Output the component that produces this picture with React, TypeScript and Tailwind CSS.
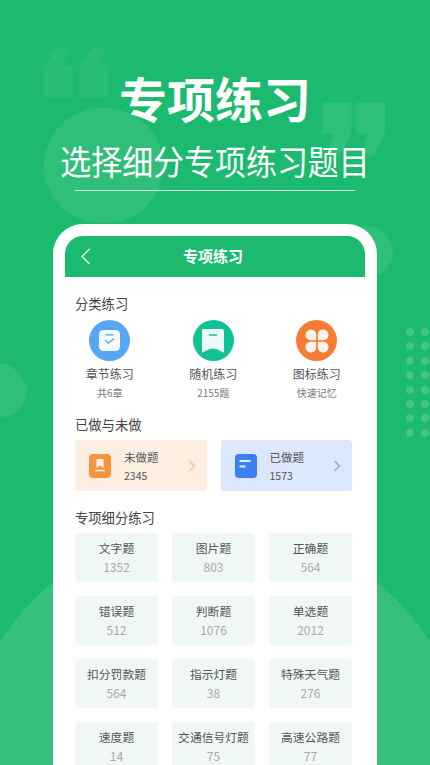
import React from 'react';

const font = { fontFamily: '"Noto Sans CJK SC", "Noto Sans", sans-serif' };

const practice = [
  { name: '文字题', count: 1352 },
  { name: '图片题', count: 803 },
  { name: '正确题', count: 564 },
  { name: '错误题', count: 512 },
  { name: '判断题', count: 1076 },
  { name: '单选题', count: 2012 },
  { name: '扣分罚款题', count: 564 },
  { name: '指示灯题', count: 38 },
  { name: '特殊天气题', count: 276 },
  { name: '速度题', count: 14 },
  { name: '交通信号灯题', count: 75 },
  { name: '高速公路题', count: 77 },
];

const Decor: React.FC = () => (
  <div className="absolute inset-0 pointer-events-none">
    <div className="absolute left-[-42px] top-[525px] w-[514px] h-[514px] rounded-full bg-[#36c07c]" />
    <div className="absolute left-[44px] top-[108px] w-[119px] h-[115px] rounded-full bg-[#2fbf79]" />
    <div className="absolute left-[341px] top-[226px] w-[52px] h-[52px] rounded-full bg-[#2fbf79]" />
    <div className="absolute left-[-28px] top-[364px] w-[54px] h-[54px] rounded-full bg-[#2fbf79]" />
    <svg className="absolute left-[44px] top-[47px]" width="64" height="51" viewBox="0 0 64 51" fill="#27bd75" stroke="#27bd75" strokeWidth="3" strokeLinejoin="round">
      <path d="M13 2h11L17 20h10v29H2V22z" />
      <path d="M49 2h11L53 20h9v29H37V22z" />
    </svg>
    <svg className="absolute left-[322px] top-[102px]" width="64" height="54" viewBox="0 0 64 54" fill="#2ebf78" stroke="#2ebf78" strokeWidth="3" strokeLinejoin="round">
      <path d="M2 2h26v28L17 52H7l7-22H2z" />
      <path d="M36 2h26v28L51 52H41l7-22H36z" />
    </svg>
    <div className="absolute left-[406px] top-[328px] grid grid-cols-2 gap-x-[7px] gap-y-[6.4px]">
      {Array.from({ length: 16 }).map((_, i) => (
        <div key={i} className="w-[8px] h-[8px] rounded-full bg-[#45c488]" />
      ))}
    </div>
  </div>
);

const SectionTitle: React.FC<{ children: React.ReactNode; className?: string }> = ({ children, className }) => (
  <div className={`text-[13.3px] leading-[18px] text-[#444] ${className ?? ''}`}>{children}</div>
);

const ChevronRight: React.FC<{ color: string }> = ({ color }) => (
  <svg width="8" height="12" viewBox="0 0 8 12" fill="none" stroke={color} strokeWidth="1.4">
    <path d="M1.5 1 6.5 6l-5 5" />
  </svg>
);

export default function App() {
  return (
    <div className="relative w-[430px] h-[765px] overflow-hidden bg-[#1cba6f]" style={font}>
      <Decor />

      <div className="relative flex flex-col items-center pt-[69px]">
        <h1 className="text-[48px] leading-[56px] font-bold text-white">专项练习</h1>
        <p className="mt-[14px] text-[34px] leading-[44px] text-white scale-x-[0.91]">选择细分专项练习题目</p>
        <div className="mt-[7px] w-[280px] h-px bg-[#d4f3e3]" />

        {/* Phone */}
        <div className="mt-[33px] w-[324px] h-[545px] overflow-hidden rounded-t-[30px] bg-white px-[12px] pt-[12px]">
          <div className="relative h-[41px] flex items-center justify-center pr-[4px] rounded-t-[18px] bg-[#1cba6f]">
            <svg className="absolute left-[15px] top-[12px]" width="11" height="17" viewBox="0 0 11 17" fill="none" stroke="#e8f8f0" strokeWidth="1.4">
              <path d="M9.5 1 2 8.5 9.5 16" />
            </svg>
            <span className="text-[15px] font-bold text-white">专项练习</span>
          </div>

          <div className="pl-[10px] pr-[13px] pt-[18px]">
            <SectionTitle>分类练习</SectionTitle>

            <div className="mt-[7px] -ml-[17px] grid grid-cols-[103.5px_103.5px_103.5px] text-center">
              <div className="flex flex-col items-center">
                <div className="w-[41px] h-[41px] rounded-full bg-[#57a6f2] flex items-center justify-center">
                  <svg width="21" height="21" viewBox="0 0 21 21">
                    <rect width="21" height="21" rx="4.5" fill="#f5f9fe" />
                    <path d="M6.5 4.8h8" stroke="#57a6f2" strokeWidth="1.3" />
                    <path d="m6 10 3.4 3.2L15 8.4" fill="none" stroke="#57a6f2" strokeWidth="1.3" />
                  </svg>
                </div>
              </div>
              <div className="flex flex-col items-center">
                <div className="w-[41px] h-[41px] rounded-full bg-[#12c194] flex items-center justify-center">
                  <svg width="22" height="24" viewBox="0 0 22 24">
                    <path d="M2 0h18a2 2 0 0 1 2 2v21.500c-4-1-6-4-11-4s-7 3-11 4V2a2 2 0 0 1 2-2z" fill="#eafaf6" />
                    <path d="M7 6h8" stroke="#12c194" strokeWidth="1.5" />
                  </svg>
                </div>
              </div>
              <div className="flex flex-col items-center">
                <div className="w-[41px] h-[41px] rounded-full bg-[#f47c35] flex items-center justify-center">
                  <svg width="26" height="26" viewBox="0 0 26 26" fill="#fff3ea">
                    <path d="M7 1.500c3 0 5.200 2.200 5.200 5.500v5.200H7C3.800 12.200 1.500 10 1.500 7S3.800 1.500 7 1.500z" />
                    <path d="M19 1.500c-3 0-5.200 2.200-5.200 5.500v5.200H19c3.200 0 5.500-2.200 5.500-5.200S22.200 1.500 19 1.500z" />
                    <path d="M7 24.500c3 0 5.200-2.200 5.200-5.500v-5.200H7c-3.200 0-5.500 2.200-5.500 5.200S3.800 24.500 7 24.500z" />
                    <path d="M19 24.500c-3 0-5.200-2.200-5.200-5.500v-5.200H19c3.200 0 5.500 2.200 5.500 5.200s-2.300 5.500-5.500 5.500z" />
                  </svg>
                </div>
              </div>

              <div className="mt-[5px] text-[12px] leading-[16px] text-[#555]">章节练习</div>
              <div className="mt-[5px] text-[12px] leading-[16px] text-[#555]">随机练习</div>
              <div className="mt-[5px] text-[12px] leading-[16px] text-[#555]">图标练习</div>
              <div className="mt-[4px] text-[10px] leading-[14px] text-[#777]">共6章</div>
              <div className="mt-[4px] text-[10px] leading-[14px] text-[#777]">2155题</div>
              <div className="mt-[4px] text-[10px] leading-[14px] text-[#777]">快速记忆</div>
            </div>

            <SectionTitle className="mt-[16px]">已做与未做</SectionTitle>

            <div className="mt-[6px] grid grid-cols-2 gap-[14px]">
              <div className="h-[51px] rounded-[3px] bg-[#fdeee2] flex items-center pl-[14px] pr-[11px]">
                <svg width="22" height="24" viewBox="0 0 22 24">
                  <rect width="22" height="24" rx="4" fill="#f5963f" />
                  <path d="M7.500 5h7v9l-3.500-2.500L7.500 14z" fill="#fff3e6" />
                  <path d="M6 16.500h10" stroke="#fff3e6" strokeWidth="1.5" />
                </svg>
                <div className="ml-[13px] flex-1">
                  <div className="text-[11.5px] leading-[16px] text-[#555]">未做题</div>
                  <div className="mt-[4px] text-[10.5px] leading-[14px] text-[#555]">2345</div>
                </div>
                <ChevronRight color="#f0c191" />
              </div>
              <div className="h-[51px] rounded-[3px] bg-[#dde7fb] flex items-center pl-[14px] pr-[11px]">
                <svg width="22" height="24" viewBox="0 0 22 24">
                  <rect width="22" height="24" rx="4" fill="#3d7ff0" />
                  <path d="M4.500 7h11M4.500 12.500h6" stroke="#e4eefd" strokeWidth="1.8" />
                </svg>
                <div className="ml-[13px] flex-1">
                  <div className="text-[11.5px] leading-[16px] text-[#555]">已做题</div>
                  <div className="mt-[4px] text-[10.5px] leading-[14px] text-[#555]">1573</div>
                </div>
                <ChevronRight color="#8fa8dc" />
              </div>
            </div>

            <SectionTitle className="mt-[18px]">专项细分练习</SectionTitle>

            <div className="mt-[6px] grid grid-cols-3 gap-x-[14px] gap-y-[14px]">
              {practice.map((p) => (
                <div key={p.name} className="h-[49px] rounded-[3px] bg-[#f0f8f5] flex flex-col items-center justify-center">
                  <div className="text-[11.8px] leading-[16px] text-[#555]">{p.name}</div>
                  <div className="mt-[3px] text-[12px] leading-[16px] text-[#aaa]">{p.count}</div>
                </div>
              ))}
            </div>
          </div>
        </div>
      </div>
    </div>
  );
}
